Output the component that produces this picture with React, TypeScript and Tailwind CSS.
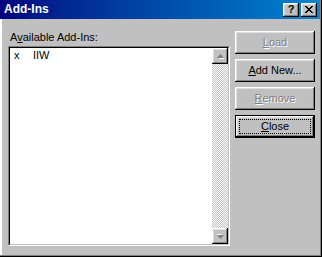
import React from 'react';

const raised =
  'shadow-[inset_-1px_-1px_#000000,inset_1px_1px_#ffffff,inset_-2px_-2px_#808080,inset_2px_2px_#dfdfdf]';

type BtnProps = {
  label: string;
  mnemonic: number;
  disabled?: boolean;
  isDefault?: boolean;
};

function Mnemonic({ label, mnemonic }: { label: string; mnemonic: number }) {
  return (
    <span>
      {label.slice(0, mnemonic)}
      <span className="underline underline-offset-[1px]">{label[mnemonic]}</span>
      {label.slice(mnemonic + 1)}
    </span>
  );
}

function DlgButton({ label, mnemonic, disabled = false, isDefault = false }: BtnProps) {
  const text = disabled ? 'text-[#808080] [text-shadow:1px_1px_0_#ffffff]' : 'text-black';
  if (isDefault) {
    return (
      <div className="w-[80px] h-[23px] border border-black bg-[#c0c0c0]">
        <div className={`relative w-full h-full flex items-center justify-center ${raised} ${text}`}>
          <div className="absolute inset-[3px] border border-dotted border-black" />
          <Mnemonic label={label} mnemonic={mnemonic} />
        </div>
      </div>
    );
  }
  return (
    <div className={`w-[80px] h-[23px] flex items-center justify-center bg-[#c0c0c0] ${raised} ${text}`}>
      <Mnemonic label={label} mnemonic={mnemonic} />
    </div>
  );
}

function ArrowBox({ down = false }: { down?: boolean }) {
  return (
    <div className={`w-[16px] h-[16px] bg-[#c0c0c0] flex items-center justify-center ${raised}`}>
      <svg width="7" height="5" viewBox="0 0 7 5" className={down ? 'rotate-180' : ''}>
        <polygon points="4,1 7,4 1,4" fill="#ffffff" transform="translate(1,1)" />
        <polygon points="3.5,0 7,4 0,4" fill="#808080" />
      </svg>
    </div>
  );
}

export default function App() {
  return (
    <div
      className="w-[322px] h-[257px] bg-[#c0c0c0] flex flex-col text-[11px] leading-[13px] shadow-[inset_-1px_-1px_#000000,inset_-2px_-2px_#808080,inset_2px_0_#ffffff]"
      style={{ fontFamily: '"Liberation Sans", Arial, sans-serif' }}
    >
      <div className="w-[320px] h-[19px] flex items-center justify-between pl-[4px] pr-[3px] bg-gradient-to-r from-[#000080] to-[#1084d0]">
        <span className="text-white font-bold text-[12px]">Add-Ins</span>
        <div className="flex gap-[2px]">
          <div className={`w-[16px] h-[14px] bg-[#c0c0c0] flex items-center justify-center font-bold text-[11px] text-black ${raised}`}>
            ?
          </div>
          <div className={`w-[16px] h-[14px] bg-[#c0c0c0] flex items-center justify-center ${raised}`}>
            <svg width="8" height="7" viewBox="0 0 8 7">
              <path d="M0,0h2v1h1v1h2v-1h1v-1h2v1h-1v1h-1v1h-1v1h1v1h1v1h1v1h-2v-1h-1v-1h-2v1h-1v1h-2v-1h1v-1h1v-1h1v-1h-1v-1h-1v-1h-1z" fill="#000000" />
            </svg>
          </div>
        </div>
      </div>

      <div className="flex flex-row pt-[12px] pl-[8px] text-black">
        <div className="flex flex-col">
          <div className="pl-[2px] h-[13px]">
            <Mnemonic label="Available Add-Ins:" mnemonic={1} />
          </div>
          <div className="mt-[2px] w-[222px] h-[200px] border-t border-l border-[#808080] border-r border-r-white border-b border-b-white">
            <div className="w-full h-full flex border-t border-l border-black border-r border-r-[#c0c0c0] border-b border-b-[#c0c0c0] bg-white">
              <div className="flex-1 pl-[4px] pt-[1px]">
                <div className="flex">
                  <span className="w-[19px]">x</span>
                  <span>IIW</span>
                </div>
              </div>
              <div className="w-[16px] flex flex-col">
                <ArrowBox />
                <div className="flex-1 bg-[repeating-conic-gradient(#c0c0c0_0_25%,#ffffff_0_50%)] bg-[length:2px_2px]" />
                <ArrowBox down />
              </div>
            </div>
          </div>
        </div>

        <div className="flex flex-col gap-[5px] ml-[5px]">
          <DlgButton label="Load" mnemonic={0} disabled />
          <DlgButton label="Add New..." mnemonic={0} />
          <DlgButton label="Remove" mnemonic={0} disabled />
          <DlgButton label="Close" mnemonic={0} isDefault />
        </div>
      </div>
    </div>
  );
}
